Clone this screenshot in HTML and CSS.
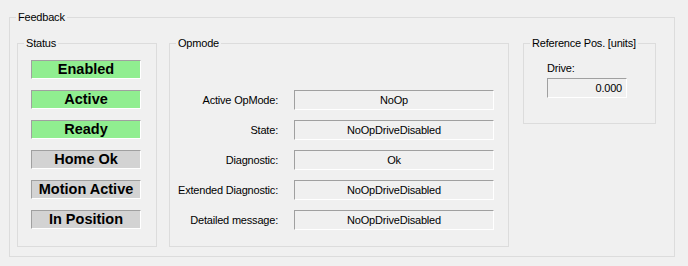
FILE: index.html
```html
<!DOCTYPE html>
<html>
<head>
<meta charset="utf-8">
<link rel="stylesheet" href="styles.css">
</head>
<body>
<fieldset class="group outer">
  <legend class="group-title">Feedback</legend>
  <div class="outer-row">
    <fieldset class="group status">
      <legend class="group-title">Status</legend>
      <div class="status-list">
        <div class="flag on">Enabled</div>
        <div class="flag on">Active</div>
        <div class="flag on">Ready</div>
        <div class="flag off">Home Ok</div>
        <div class="flag off">Motion Active</div>
        <div class="flag off">In Position</div>
      </div>
    </fieldset>
    <fieldset class="group opmode">
      <legend class="group-title">Opmode</legend>
      <div class="op-grid">
        <div class="op-label">Active OpMode:</div><div class="field center">NoOp</div>
        <div class="op-label">State:</div><div class="field center">NoOpDriveDisabled</div>
        <div class="op-label">Diagnostic:</div><div class="field center">Ok</div>
        <div class="op-label">Extended Diagnostic:</div><div class="field center">NoOpDriveDisabled</div>
        <div class="op-label">Detailed message:</div><div class="field center">NoOpDriveDisabled</div>
      </div>
    </fieldset>
    <fieldset class="group refpos">
      <legend class="group-title">Reference Pos. [units]</legend>
      <div class="ref-body">
        <div class="ref-label">Drive:</div>
        <div class="field right drive">0.000</div>
      </div>
    </fieldset>
  </div>
</fieldset>
</body>
</html>
```

FILE: styles.css
```css
html, body {
  margin: 0;
  background: #f0f0f0;
}
body {
  padding: 11px 0 0 9px;
  font-family: "Liberation Sans", Arial, sans-serif;
  font-size: 11px;
  letter-spacing: -0.2px;
  color: #000;
}
.group {
  margin: 0;
  padding: 0;
  border: 1px solid #dcdcdc;
  min-width: 0;
  box-sizing: border-box;
}
.group-title {
  margin-left: 6px;
  padding: 0 2px;
  line-height: 13px;
  height: 13px;
}
.outer {
  width: 666px;
}
.outer-row {
  display: flex;
  align-items: stretch;
  padding: 13px 0 9px 7px;
}
.status {
  width: 140px;
}
.status-list {
  display: flex;
  flex-direction: column;
  gap: 11px;
  padding: 10px 0 17px 13px;
}
.flag {
  width: 110px;
  height: 19px;
  box-sizing: border-box;
  border-top: 1px solid #a0a0a0;
  border-left: 1px solid #a0a0a0;
  border-right: 1px solid #fff;
  border-bottom: 1px solid #fff;
  font-size: 14.5px;
  font-weight: bold;
  letter-spacing: 0;
  line-height: 17px;
  text-align: center;
}
.flag.on { background: #90ee90; }
.flag.off { background: #d3d3d3; }
.opmode {
  width: 340px;
  margin-left: 12px;
}
.op-grid {
  display: grid;
  grid-template-columns: 108px 200px;
  column-gap: 16px;
  row-gap: 10px;
  padding-top: 40px;
}
.op-label {
  text-align: right;
  line-height: 20px;
  height: 20px;
}
.field {
  height: 20px;
  box-sizing: border-box;
  border-top: 1px solid #a0a0a0;
  border-left: 1px solid #a0a0a0;
  border-right: 1px solid #fff;
  border-bottom: 1px solid #fff;
  line-height: 18px;
  white-space: nowrap;
}
.field.center { text-align: center; }
.field.right { text-align: right; padding-right: 4px; }
.refpos {
  width: 133px;
  margin-left: 14px;
  align-self: flex-start;
}
.ref-body {
  padding: 12px 0 25px 23px;
}
.ref-label {
  line-height: 13px;
  margin-bottom: 3px;
}
.drive {
  width: 80px;
}
```
